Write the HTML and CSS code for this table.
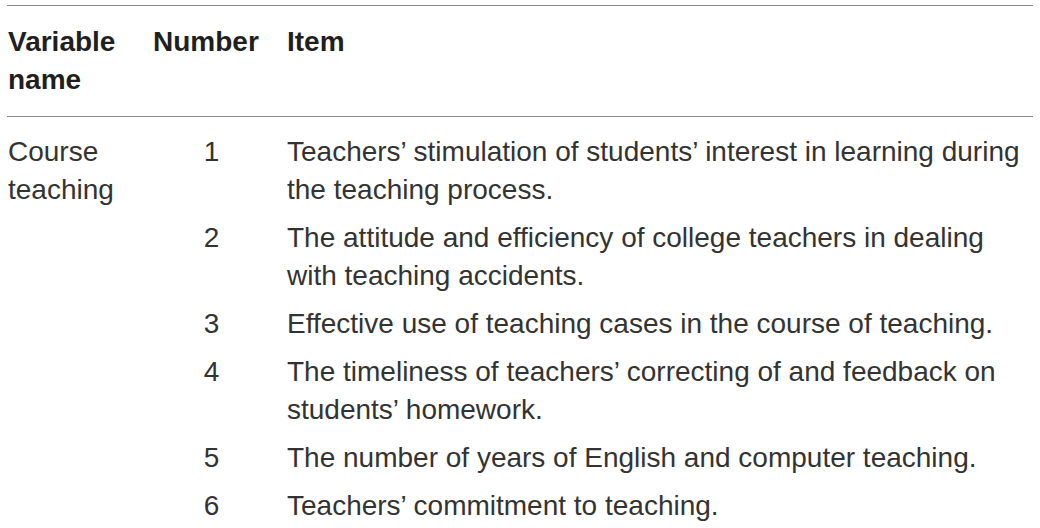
FILE: index.html
```html
<!DOCTYPE html>
<html lang="en">
<head>
<meta charset="utf-8">
<title>Course teaching items</title>
<link rel="stylesheet" href="styles.css">
</head>
<body>
<table class="items">
  <colgroup>
    <col class="col-var">
    <col class="col-num">
    <col class="col-item">
  </colgroup>
  <thead>
    <tr>
      <th>Variable name</th>
      <th>Number</th>
      <th>Item</th>
    </tr>
  </thead>
  <tbody>
    <tr class="first">
      <td rowspan="6">Course teaching</td>
      <td class="num">1</td>
      <td>Teachers’ stimulation of students’ interest in learning during the teaching process.</td>
    </tr>
    <tr>
      <td class="num">2</td>
      <td>The attitude and efficiency of college teachers in dealing with teaching accidents.</td>
    </tr>
    <tr>
      <td class="num">3</td>
      <td>Effective use of teaching cases in the course of teaching.</td>
    </tr>
    <tr>
      <td class="num">4</td>
      <td>The timeliness of teachers’ correcting of and feedback on students’ homework.</td>
    </tr>
    <tr>
      <td class="num">5</td>
      <td>The number of years of English and computer teaching.</td>
    </tr>
    <tr>
      <td class="num">6</td>
      <td>Teachers’ commitment to teaching.</td>
    </tr>
  </tbody>
</table>
</body>
</html>
```

FILE: styles.css
```css
html, body {
  margin: 0;
  padding: 0;
  background: #ffffff;
}

body {
  font-family: "Liberation Sans", Arial, sans-serif;
  font-size: 28px;
  line-height: 38px;
  color: #333333;
}

.items {
  margin: 5px 7px 0 7px;
  width: 1026px;
  table-layout: fixed;
  border-collapse: collapse;
}

.col-var { width: 145px; }
.col-num { width: 134px; }
.col-item { width: 747px; }

.items thead tr {
  border-top: 1px solid #8a8a8a;
  border-bottom: 1px solid #8a8a8a;
}

.items th {
  text-align: left;
  vertical-align: top;
  font-weight: bold;
  color: #1f1f1f;
  padding: 17px 8px 17px 1px;
}

.items td {
  vertical-align: top;
  padding: 5px 8px 5px 1px;
  font-weight: normal;
}

.items tr.first td {
  padding-top: 16px;
}

.items td.num {
  text-align: center;
  padding-right: 16px;
}
```
